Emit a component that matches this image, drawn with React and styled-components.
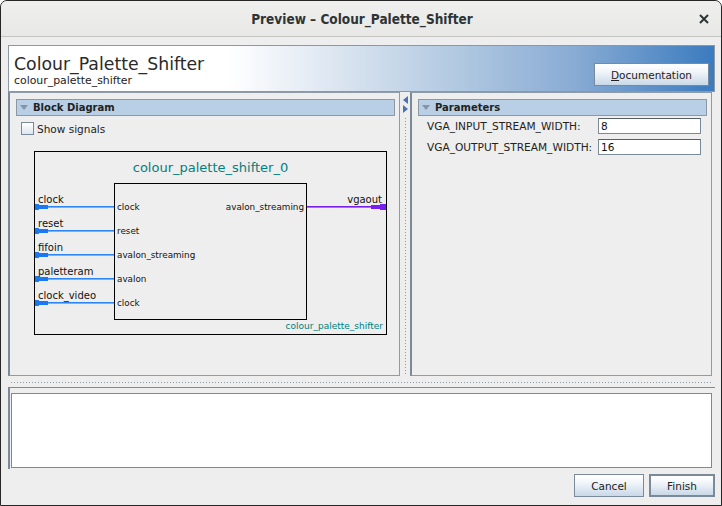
import React from "react";
import styled, { createGlobalStyle } from "styled-components";

const GlobalStyle = createGlobalStyle`
  html, body {
    margin: 0;
    padding: 0;
    background: #ffffff;
  }
  body {
    font-family: "DejaVu Sans", "Liberation Sans", sans-serif;
    color: #222;
  }
`;

const inPorts = [
  { name: "clock", iface: "clock", y: 54 },
  { name: "reset", iface: "reset", y: 78 },
  { name: "fifoin", iface: "avalon_streaming", y: 102 },
  { name: "paletteram", iface: "avalon", y: 126 },
  { name: "clock_video", iface: "clock", y: 150 },
];

const params = [
  { label: "VGA_INPUT_STREAM_WIDTH:", value: "8" },
  { label: "VGA_OUTPUT_STREAM_WIDTH:", value: "16" },
];

const Window = styled.div`
  width: 722px;
  height: 506px;
  box-sizing: border-box;
  border: 1px solid #262626;
  border-radius: 7px 7px 0 0;
  background: #eeeeee;
  display: flex;
  flex-direction: column;
  overflow: hidden;
`;

const TitleBar = styled.div`
  height: 35px;
  flex: none;
  border-bottom: 1px solid #c2c2bf;
  background: linear-gradient(#efefee, #e8e8e6);
  border-radius: 6px 6px 0 0;
  display: flex;
  align-items: center;
  justify-content: center;
  position: relative;
`;

const TitleText = styled.div`
  font-family: "DejaVu Sans Condensed", "DejaVu Sans", sans-serif;
  font-weight: bold;
  font-size: 13.5px;
  color: #2e3436;
  margin-left: 2px;
`;

const CloseButton = styled.div`
  position: absolute;
  right: 12px;
  top: 13px;
  width: 10px;
  height: 10px;
  display: flex;
`;

const Content = styled.div`
  flex: 1;
  display: flex;
  flex-direction: column;
  padding: 8px 6px 0 7px;
`;

const Header = styled.div`
  height: 47px;
  box-sizing: border-box;
  flex: none;
  border: 1px solid #8b98a5;
  background: linear-gradient(
    to right,
    #ffffff 0%,
    #ffffff 31%,
    #dfe8f2 45%,
    #b5cbe2 62%,
    #89acd4 80%,
    #3b7bbf 100%
  );
  display: flex;
  justify-content: space-between;
  padding: 8px 5px 5px 5px;
`;

const HeaderText = styled.div`
  display: flex;
  flex-direction: column;
`;

const HeaderTitle = styled.div`
  font-size: 17.3px;
  line-height: 20px;
  color: #2a2a2a;
`;

const HeaderSub = styled.div`
  font-size: 10.9px;
  line-height: 13px;
  color: #222;
`;

const Button = styled.button`
  box-sizing: border-box;
  height: 23px;
  width: ${(p) => p.$w}px;
  padding: 0;
  border: ${(p) => (p.$default ? "2px" : "1px")} solid #7a8a99;
  background: linear-gradient(#ffffff 0%, #f2f6fa 35%, #c9d8e8 100%);
  font-family: "DejaVu Sans", sans-serif;
  font-size: 10.5px;
  color: #222;
  align-self: flex-end;
  u {
    text-decoration: underline;
  }
`;

const Split = styled.div`
  height: 284px;
  flex: none;
  display: flex;
`;

const Panel = styled.div`
  box-sizing: border-box;
  width: ${(p) => p.$w}px;
  border: 1px solid #8f9ba7;
  border-left: 2px solid #7a8a99;
  display: flex;
  flex-direction: column;
`;

const SectionHeader = styled.div`
  box-sizing: border-box;
  height: 17px;
  margin: 6px 4px 0 6px;
  border: 1px solid #8b98a5;
  background: #b8cfe5;
  display: flex;
  align-items: center;
  padding-left: 3px;
  font-weight: bold;
  font-size: 10px;
  color: #222;
`;

const Caret = styled.span`
  width: 0;
  height: 0;
  border-left: 4px solid transparent;
  border-right: 4px solid transparent;
  border-top: 5px solid #8595a6;
  margin-right: 5px;
`;

const CheckRow = styled.label`
  display: flex;
  align-items: center;
  margin: 6px 0 0 11px;
  font-size: 10.5px;
  height: 13px;
`;

const CheckBox = styled.span`
  box-sizing: border-box;
  width: 13px;
  height: 13px;
  border: 1px solid #7a8a99;
  background: linear-gradient(#ffffff, #dde6ef);
  margin-right: 3px;
`;

const DiagramBox = styled.div`
  position: relative;
  box-sizing: border-box;
  width: 353px;
  height: 184px;
  margin: 16px 0 0 24px;
  border: 1px solid #000;
`;

const DiagramTitle = styled.div`
  position: absolute;
  top: 8px;
  left: 0;
  right: 0;
  text-align: center;
  font-size: 13px;
  line-height: 15px;
  color: #008080;
`;

const Block = styled.div`
  position: absolute;
  left: 79px;
  top: 31px;
  width: 193px;
  height: 137px;
  box-sizing: border-box;
  border: 1px solid #000;
`;

const Wires = styled.svg`
  position: absolute;
  left: 0;
  top: 0;
`;

const PortName = styled.div`
  position: absolute;
  top: ${(p) => p.$y - 12}px;
  ${(p) => (p.$right ? "right: 4px;" : "left: 3px;")}
  font-size: 10px;
  line-height: 12px;
  color: #111;
`;

const IfaceName = styled.div`
  position: absolute;
  top: ${(p) => p.$y - 4}px;
  ${(p) => (p.$right ? "right: 82px;" : "left: 82px;")}
  font-size: 8.8px;
  line-height: 11px;
  color: #111;
`;

const TypeName = styled.div`
  position: absolute;
  right: 3px;
  bottom: 2px;
  font-size: 9px;
  line-height: 11px;
  color: #008080;
`;

const VSplitter = styled.div`
  width: 10px;
  flex: none;
  position: relative;
  display: flex;
  flex-direction: column;
  align-items: center;
  padding-top: 4px;
  box-sizing: border-box;
`;

const Dots = styled.div`
  flex: 1;
  width: 3px;
  margin-top: 3px;
  background-image: radial-gradient(circle, #8e9aa6 0.7px, transparent 0.9px);
  background-size: 3px 3px;
`;

const ParamGrid = styled.div`
  display: grid;
  grid-template-columns: 166px 103px;
  column-gap: 5px;
  row-gap: 5px;
  margin: 2px 0 0 15px;
  align-items: center;
  justify-content: start;
`;

const ParamLabel = styled.div`
  font-size: 10.6px;
  color: #222;
`;

const ParamInput = styled.div`
  box-sizing: border-box;
  height: 16px;
  border: 1px solid #7a8a99;
  border-top-color: #55606b;
  background: #fff;
  font-size: 10.5px;
  line-height: 14px;
  padding-left: 2px;
  color: #111;
`;

const HSplitter = styled.div`
  height: 11px;
  flex: none;
  display: flex;
  align-items: center;
  padding: 0 2px 0 2px;
`;

const HDots = styled.div`
  flex: 1;
  height: 3px;
  margin-top: 1px;
  background-image: radial-gradient(circle, #8e9aa6 0.7px, transparent 0.9px);
  background-size: 3px 3px;
`;

const MessagePanel = styled.div`
  height: 82px;
  flex: none;
  box-sizing: border-box;
  border-top: 1px solid #7a8a99;
  border-left: 2px solid #7a8a99;
  padding: 5px 3px 1px 1px;
  display: flex;
`;

const MessageArea = styled.div`
  flex: 1;
  background: #fff;
  border: 1px solid #7a8a99;
`;

const ButtonRow = styled.div`
  display: flex;
  justify-content: flex-end;
  gap: 5px;
  padding-top: 5px;
`;

const ArrowIcon = styled.svg`
  display: block;
  margin-bottom: 1px;
`;

const Arrow = ({ dir }) => (
  <ArrowIcon width="5" height="8" viewBox="0 0 5 8">
    {dir === "left" ? (
      <polygon points="5,0 0,4 5,8" fill="#4a73b5" />
    ) : (
      <polygon points="0,0 5,4 0,8" fill="#4a73b5" />
    )}
  </ArrowIcon>
);

const Diagram = () => (
  <DiagramBox>
    <DiagramTitle>colour_palette_shifter_0</DiagramTitle>
    <Block />
    <Wires width="351" height="182">
      {inPorts.map((p) => (
        <g key={p.name}>
          <rect x="0" y={p.y - 2} width="4" height="6" fill="#1b78f0" />
          <rect x="4" y={p.y - 1} width="9" height="4" fill="#1b78f0" />
          <rect x="13" y={p.y} width="66" height="1" fill="#2a86f7" />
          <rect x="13" y={p.y + 1} width="66" height="1" fill="#73b2ff" />
        </g>
      ))}
      <rect x="272" y="54" width="73" height="1" fill="#7a1ef0" />
      <rect x="272" y="55" width="73" height="1" fill="#a66bff" />
      <rect x="336" y="53" width="9" height="4" fill="#7a1ef0" />
      <rect x="345" y="52" width="6" height="6" fill="#7a1ef0" />
    </Wires>
    {inPorts.map((p) => (
      <React.Fragment key={p.name}>
        <PortName $y={p.y}>{p.name}</PortName>
        <IfaceName $y={p.y}>{p.iface}</IfaceName>
      </React.Fragment>
    ))}
    <PortName $y={54} $right>vgaout</PortName>
    <IfaceName $y={54} $right>avalon_streaming</IfaceName>
    <TypeName>colour_palette_shifter</TypeName>
  </DiagramBox>
);

export default function App() {
  return (
    <>
      <GlobalStyle />
      <Window>
        <TitleBar>
          <TitleText>Preview – Colour_Palette_Shifter</TitleText>
          <CloseButton>
            <svg width="10" height="10" viewBox="0 0 10 10">
              <path d="M1 1 L9 9 M9 1 L1 9" stroke="#2e3436" strokeWidth="2" />
            </svg>
          </CloseButton>
        </TitleBar>
        <Content>
          <Header>
            <HeaderText>
              <HeaderTitle>Colour_Palette_Shifter</HeaderTitle>
              <HeaderSub>colour_palette_shifter</HeaderSub>
            </HeaderText>
            <Button $w={115}>
              <u>D</u>ocumentation
            </Button>
          </Header>
          <Split>
            <Panel $w={392}>
              <SectionHeader>
                <Caret />
                Block Diagram
              </SectionHeader>
              <CheckRow>
                <CheckBox />
                Show signals
              </CheckRow>
              <Diagram />
            </Panel>
            <VSplitter>
              <Arrow dir="left" />
              <Arrow dir="right" />
              <Dots />
            </VSplitter>
            <Panel $w={302}>
              <SectionHeader>
                <Caret />
                Parameters
              </SectionHeader>
              <ParamGrid>
                {params.map((p) => (
                  <React.Fragment key={p.label}>
                    <ParamLabel>{p.label}</ParamLabel>
                    <ParamInput>{p.value}</ParamInput>
                  </React.Fragment>
                ))}
              </ParamGrid>
            </Panel>
          </Split>
          <HSplitter>
            <HDots />
          </HSplitter>
          <MessagePanel>
            <MessageArea />
          </MessagePanel>
          <ButtonRow>
            <Button $w={70}>Cancel</Button>
            <Button $w={66} $default>
              Finish
            </Button>
          </ButtonRow>
        </Content>
      </Window>
    </>
  );
}
